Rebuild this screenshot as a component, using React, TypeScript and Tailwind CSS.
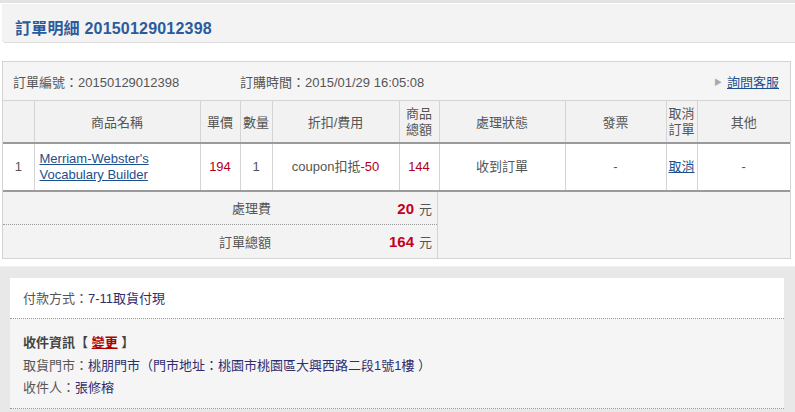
import React from "react";

const cjk = "font-['Liberation_Sans','Noto_Sans_CJK_TC',sans-serif]";

export default function App() {
  return (
    <div className={`${cjk} w-[795px] h-[412px] overflow-hidden bg-white text-[13px] text-[#555]`}>
      <div className="h-[3px] bg-[#e3e3e3]" />
      <div className="ml-[2px] mt-[1px] h-[39px] flex items-start rounded-bl-[4px] bg-[#f3f3f3] border-b border-[#dcdcdc] pl-[13px] pt-[13px]">
        <h1 className="text-[16px] leading-[24px] font-bold text-[#2a5b9c] tracking-[0.2px]">訂單明細 20150129012398</h1>
      </div>

      <div className="mt-[18px] ml-[2px] w-[789px] border border-[#d4d4d4]">
        <div className="h-[39px] flex items-center bg-[#f5f5f5] px-[10px] pt-[3px] border-b border-[#d4d4d4]">
          <span className="w-[227px]">訂單編號：20150129012398</span>
          <span>訂購時間：2015/01/29 16:05:08</span>
          <span className="ml-auto flex items-center gap-[5px] pr-[1px]">
            <span className="text-[8px] text-[#aaa]">▶</span>
            <a className="underline text-[#1d4f8c]">詢問客服</a>
          </span>
        </div>

        <table className="w-[787px] table-fixed border-collapse text-center">
          <colgroup>
            <col className="w-[31px]" />
            <col className="w-[166px]" />
            <col className="w-[40px]" />
            <col className="w-[32px]" />
            <col className="w-[127px]" />
            <col className="w-[40px]" />
            <col className="w-[126px]" />
            <col className="w-[101px]" />
            <col className="w-[31px]" />
            <col className="w-[93px]" />
          </colgroup>
          <thead>
            <tr className="h-[42px] bg-[#f2f2f2] border-b-2 border-[#9a9a9a] leading-[16px]">
              <th className="font-normal border-r border-[#d4d4d4]"></th>
              <th className="font-normal border-r border-[#d4d4d4] pt-[2px]">商品名稱</th>
              <th className="font-normal border-r border-[#d4d4d4] pt-[2px]">單價</th>
              <th className="font-normal border-r border-[#d4d4d4] pt-[2px]">數量</th>
              <th className="font-normal border-r border-[#d4d4d4] pt-[2px]">折扣/費用</th>
              <th className="font-normal border-r border-[#d4d4d4]">商品<br />總額</th>
              <th className="font-normal border-r border-[#d4d4d4] pt-[2px]">處理狀態</th>
              <th className="font-normal border-r border-[#d4d4d4] pt-[2px]">發票</th>
              <th className="font-normal border-r border-[#d4d4d4]">取消<br />訂單</th>
              <th className="font-normal pt-[2px]">其他</th>
            </tr>
          </thead>
          <tbody>
            <tr className="h-[48px] border-b-2 border-[#9a9a9a] leading-[16px]">
              <td className="border-r border-[#d4d4d4]">1</td>
              <td className="border-r border-[#d4d4d4] text-left pl-[5px]">
                <a className="underline text-[#1d4f8c]">Merriam-Webster's<br />Vocabulary Builder</a>
              </td>
              <td className="border-r border-[#d4d4d4] text-[#b0001b]">194</td>
              <td className="border-r border-[#d4d4d4]">1</td>
              <td className="border-r border-[#d4d4d4]">coupon扣抵<span className="text-[#b0001b]">-50</span></td>
              <td className="border-r border-[#d4d4d4] text-[#b0001b]">144</td>
              <td className="border-r border-[#d4d4d4]">收到訂單</td>
              <td className="border-r border-[#d4d4d4]">-</td>
              <td className="border-r border-[#d4d4d4]"><a className="underline text-[#1d4f8c]">取消</a></td>
              <td>-</td>
            </tr>
          </tbody>
        </table>

        <div className="flex bg-[#f3f3f3]">
          <div className="w-[435px] border-r border-[#d4d4d4]">
            <div className="h-[33px] flex items-center pt-[2px] border-b border-dotted border-[#999]">
              <span className="w-[268px] text-right">處理費</span>
              <span className="flex-1 text-right pr-[5px]">
                <b className="text-[15px] text-[#c4001d]">20</b>
                <span className="ml-[5px]">元</span>
              </span>
            </div>
            <div className="h-[33px] flex items-center pt-[2px]">
              <span className="w-[268px] text-right">訂單總額</span>
              <span className="flex-1 text-right pr-[5px]">
                <b className="text-[15px] text-[#c4001d]">164</b>
                <span className="ml-[5px]">元</span>
              </span>
            </div>
          </div>
          <div className="flex-1" />
        </div>
      </div>

      <div className="mt-[7px] border-t border-[#f0f0f0] bg-[#e8e8e8] pt-[11px] pl-[10px] pr-[11px] h-[160px]">
        <div className="bg-white">
          <div className="h-[41px] flex items-center pl-[13px] pt-[2px] border-b border-dotted border-[#999]">
            付款方式：<span className="text-[#2e2e6e]">7-11取貨付現</span>
          </div>
          <div className="bg-[#f5f5f5] pl-[13px] pt-[13px] pb-[8px] leading-[22.5px] border-b border-dotted border-[#999]">
            <div className="font-bold text-[#444]">收件資訊【 <a className="underline text-[#a00]">變更</a> 】</div>
            <div>取貨門市：<span className="text-[#2e2e6e]">桃朋門市（門市地址：桃園市桃園區大興西路二段1號1樓 ）</span></div>
            <div>收件人：<span className="text-[#2e2e6e]">張修榕</span></div>
          </div>
        </div>
      </div>
    </div>
  );
}
